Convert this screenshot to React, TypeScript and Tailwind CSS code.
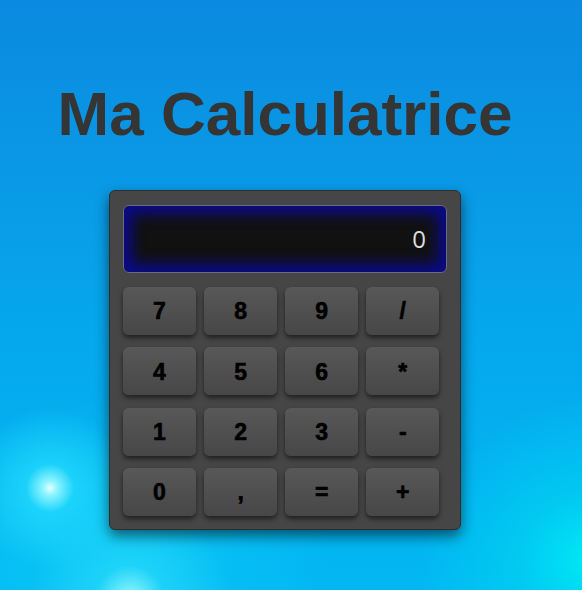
const keys = ["7", "8", "9", "/", "4", "5", "6", "*", "1", "2", "3", "-", "0", ",", "=", "+"];

export default function App() {
  return (
    <div className="min-h-[590px] w-full overflow-hidden bg-[radial-gradient(circle_at_50px_488px,#e6ffff_0px,#8ff5ff_7px,rgba(40,225,255,0.6)_24px,rgba(20,200,250,0)_80px),radial-gradient(circle_at_130px_600px,rgba(160,252,255,0.95)_0px,rgba(40,220,250,0.6)_35px,rgba(20,200,250,0)_100px),radial-gradient(ellipse_220px_140px_at_110px_540px,rgba(20,215,250,0.55)_0%,rgba(20,205,250,0)_100%),radial-gradient(ellipse_at_590px_560px,rgba(0,235,245,0.95)_0px,rgba(0,218,242,0.55)_70px,rgba(0,190,240,0)_170px),linear-gradient(180deg,#0a8ae0_0%,#0a99e6_30%,#05a9ee_60%,#02b8f2_100%)] font-['Liberation_Sans',Arial,sans-serif]">
      <div className="flex flex-col items-center pr-[12px] pt-[79px]">
        <h1 className="text-[62px] leading-[69px] font-bold text-[#353535]">Ma Calculatrice</h1>
        <div className="mt-[42px] w-[352px] h-[340px] rounded-[6px] border border-[#2e2e2e] bg-[#464646] shadow-[0_6px_14px_rgba(0,0,0,0.55)] px-[13px] pt-[14px]">
          <div className="h-[68px] rounded-[6px] border border-[#6a6a80] bg-[#111111] shadow-[inset_0_0_14px_8px_#0a0a8a] flex items-center justify-end pr-[20px]">
            <span className="text-[24px] text-[#dddddd] font-['Open_Sans',sans-serif]">0</span>
          </div>
          <div className="mt-[14px] grid grid-cols-[repeat(4,73px)] gap-x-[8.1px] gap-y-[12.3px]">
            {keys.map((k, i) => (
              <button
                key={i}
                className="h-[48px] rounded-[6px] bg-gradient-to-b from-[#585858] to-[#474747] shadow-[0_3px_5px_rgba(0,0,0,0.55)] text-[23px] font-bold text-black flex items-center justify-center pt-[1px] [-webkit-text-stroke:0.6px_black]"
              >
                {k}
              </button>
            ))}
          </div>
        </div>
      </div>
    </div>
  );
}
